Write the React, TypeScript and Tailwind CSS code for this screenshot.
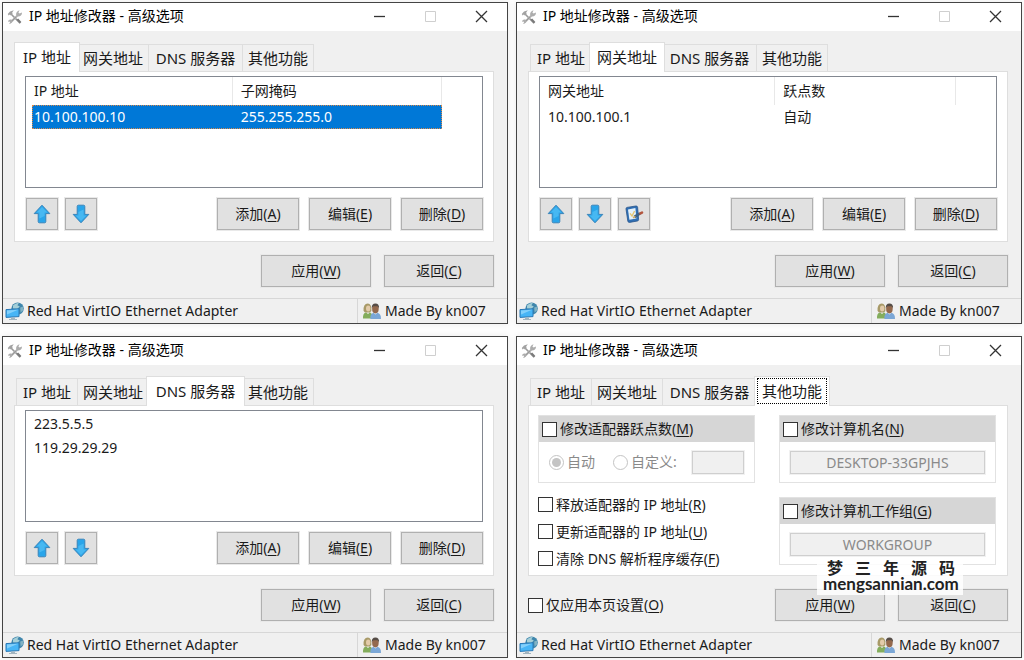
import type { ReactNode } from "react";
import clsx from "clsx";

const TABS = [
  { label: "IP 地址", width: "w-[62px]", activeWidth: "w-[66px]" },
  { label: "网关地址", width: "w-[72px]", activeWidth: "w-[76px]" },
  { label: "DNS 服务器", width: "w-[95px]", activeWidth: "w-[99px]" },
  { label: "其他功能", width: "w-[72px]", activeWidth: "w-[76px]" },
];

function ToolsIcon() {
  return (
    <svg viewBox="0 0 16 16" className="size-4" aria-hidden="true">
      <path d="M4.5 5.5 12.6 13.6" stroke="#9a9a9a" strokeWidth="1.6" strokeLinecap="round" />
      <path d="M0.8 5 3 2.4 6.8 1.2 5.2 3.4 5.6 5 3.8 6.6 2.8 5.6 1.6 6.4z" fill="#a2a2a2" />
      <path d="M10 7 4.2 12.8" stroke="#b4b4b4" strokeWidth="2" strokeLinecap="round" />
      <path d="M9 7.8 3.8 13" stroke="#8a8a8a" strokeWidth="0.8" />
      <path d="M9.2 6.4C8.6 4 10 1.8 12.6 1.2L11.4 3.4 12.6 4.6 15 3.4C15.2 6.2 13 7.6 10.8 7.4z" fill="#adadad" />
      <path d="M4.8 10.8C6 12.8 4.4 15 2 14.8L3.2 13.2 2.4 12.4 1 12.8C1 11 2.8 9.8 4.8 10.8z" fill="#adadad" />
      <path d="M9.4 10.8 12.8 14.4 14.4 13 11.2 9.4z" fill="#7a7a7a" />
    </svg>
  );
}

function ArrowIcon({ down }: { down?: boolean }) {
  return (
    <svg viewBox="0 0 18 20" className={clsx("h-5 w-[18px]", down && "rotate-180")} aria-hidden="true">
      <path d="M9 1.2 16.8 9.6H12.8V17.6Q12.8 18.8 11.6 18.8H6.4Q5.2 18.8 5.2 17.6V9.6H1.2z" fill="#29a5ea" stroke="#3a84ba" strokeWidth="1" strokeLinejoin="round" />
      <path d="M9 3 14.4 8.6H11.6V12L6.4 14.6V8.6H3.6z" fill="#5cc4f7" opacity="0.6" />
    </svg>
  );
}

function NotepadIcon() {
  return (
    <svg viewBox="0 0 20 20" className="size-5" aria-hidden="true">
      <path d="M3 3.4 11.8 2Q13.4 1.8 13.6 3.2L14.6 15.6Q14.6 16.8 13.4 17L5.6 18.4Q4 18.6 3.8 17L2 5Q1.9 3.6 3 3.4z" fill="#2f6fb4" stroke="#28548a" strokeWidth="0.8" />
      <path d="M4 5.4 11.4 4 12.4 14.4 5.4 15.8z" fill="#e4f1fb" />
      <path d="M6 9.4 8 12 10.6 7" fill="none" stroke="#e4c673" strokeWidth="1.4" />
      <path d="M10.4 13 16 9.4" stroke="#3f6385" strokeWidth="2.8" />
      <path d="M9 13.8 11.4 12.4" stroke="#cfa860" strokeWidth="1.6" />
      <path d="M16.4 9.4 18 8.6" stroke="#b3563f" strokeWidth="2.6" strokeLinecap="round" />
    </svg>
  );
}

function NetworkIcon() {
  return (
    <svg viewBox="0 0 20 20" className="size-5" aria-hidden="true">
      <circle cx="12.6" cy="7.6" r="6.2" fill="#3f86ac" />
      <path d="M8 4.6Q10.6 1.4 13.8 2L12.4 4.2 14.8 5.6 12.2 8 8 7.4z" fill="#a5cfd8" />
      <path d="M15.2 6.6 18.4 5.6 18 9.6 15.6 11.6z" fill="#82b3c4" />
      <path d="M1 8.6 14 7.8V15.6L1 16.4z" fill="#47b5f6" stroke="#2a78b5" strokeWidth="1" />
      <path d="M2 9.6 13 8.8 2 13.6z" fill="#83d0fb" />
      <path d="M6 16.6H10V18H12V19H4V18H6z" fill="#a3b5c0" />
    </svg>
  );
}

function UsersIcon() {
  return (
    <svg viewBox="0 0 20 18" className="h-[18px] w-5" aria-hidden="true">
      <path d="M1.6 9Q1 1.6 5.8 1.4 9.8 1.6 9.4 9L8 10.6H3z" fill="#a89a68" />
      <ellipse cx="6.2" cy="6.6" rx="2.2" ry="3" fill="#e3cbaa" />
      <path d="M1 16.6Q0.6 10.8 4.2 10.4L6 12 7.8 10.4Q10.6 11 10.6 16.6z" fill="#84ad5c" />
      <ellipse cx="13.4" cy="6.8" rx="3.3" ry="4.6" fill="#94694d" />
      <path d="M9.8 6Q9.6 1.4 13.4 1.4 17.4 1.4 17 6.2L15.6 4.2H11.4z" fill="#554c46" />
      <path d="M8.4 17Q8 11.6 11.6 10.8L13.4 12.4 15.4 10.8Q19.2 11.6 19 17z" fill="#7ba7d6" />
    </svg>
  );
}

/* Caption followed by its underlined access key, e.g. 添加(A) */
function Mnemonic({ text, letter }: { text: string; letter: string }) {
  return (
    <span className="whitespace-nowrap">
      {text}(<span className="underline underline-offset-2">{letter}</span>)
    </span>
  );
}

function PushButton({ text, letter, wide }: { text: string; letter: string; wide?: boolean }) {
  return (
    <button
      type="button"
      className={clsx(
        "flex h-8 items-center justify-center border border-[#b0b0b0] bg-[#e1e1e1] outline outline-[#e9e9e9]",
        wide ? "w-[110px]" : "w-[82px]"
      )}
    >
      <Mnemonic text={text} letter={letter} />
    </button>
  );
}

function IconButton({ label, children }: { label: string; children: ReactNode }) {
  return (
    <button
      type="button"
      aria-label={label}
      className="flex size-8 items-center justify-center border border-[#b0b0b0] bg-[#e1e1e1] outline outline-[#e9e9e9]"
    >
      {children}
    </button>
  );
}

function CheckBox({ text, letter }: { text: string; letter: string }) {
  return (
    <label className="flex items-center gap-[3px]">
      <input type="checkbox" className="size-[15px] shrink-0 appearance-none border border-[#333] bg-white" />
      <Mnemonic text={text} letter={letter} />
    </label>
  );
}

function TitleBar() {
  return (
    <header className="flex h-7 items-center bg-white pl-1">
      <ToolsIcon />
      <h2 className="ml-1.5 flex-1 pb-0.5 text-black">IP 地址修改器 - 高级选项</h2>
      <button type="button" aria-label="最小化" className="flex h-7 w-[51px] items-center justify-center pb-0.5">
        <svg viewBox="0 0 13 13" className="size-[13px]"><path d="M1 6.5H12" stroke="#333" strokeWidth="1.3" /></svg>
      </button>
      <button type="button" aria-label="最大化" disabled className="flex h-7 w-[51px] items-center justify-center pb-0.5">
        <svg viewBox="0 0 13 13" className="size-[13px]"><path d="M1.5 1.5H11.5V11.5H1.5z" fill="none" stroke="#cfcfcf" /></svg>
      </button>
      <button type="button" aria-label="关闭" className="flex h-7 w-[51px] items-center justify-center pb-0.5">
        <svg viewBox="0 0 13 13" className="size-[13px]"><path d="M1 1 12 12M12 1 1 12" stroke="#333" strokeWidth="1.3" /></svg>
      </button>
    </header>
  );
}

function TabBar({ active, focused }: { active: number; focused?: boolean }) {
  return (
    <div role="tablist" className="flex h-[29px] items-end pl-0.5 text-[15px]">
      {TABS.map((tab, i) => (
        <button
          key={tab.label}
          type="button"
          role="tab"
          aria-selected={i === active}
          className={clsx(
            "border-x border-t border-[#dedede] whitespace-nowrap",
            i === active
              ? ["relative z-10 -mr-[3px] -mb-px -ml-0.5 h-[30px] bg-white px-0.5 pt-px pb-0.5", tab.activeWidth]
              : ["-mr-px h-[27px] bg-[#f0f0f0]", tab.width]
          )}
        >
          {i === active ? (
            <span
              className={clsx(
                "flex h-full items-center justify-center border border-dotted",
                focused ? "border-black" : "border-transparent"
              )}
            >
              {tab.label}
            </span>
          ) : (
            tab.label
          )}
        </button>
      ))}
    </div>
  );
}

type ListProps = { columns: [string, string]; row: [string, string]; selected?: boolean };

function AddressTable({ columns, row, selected }: ListProps) {
  return (
    <table className="w-[91%] table-fixed border-separate border-spacing-0 text-left">
      <colgroup>
        <col className={selected ? "w-[49%]" : "w-[56%]"} />
        <col />
      </colgroup>
      <thead>
        <tr className="h-7">
          <th className="border-r border-[#e8e8e8] p-0 pl-0.5 font-normal">{columns[0]}</th>
          <th className="border-r border-[#e8e8e8] p-0 pl-2 font-normal">{columns[1]}</th>
        </tr>
      </thead>
      <tbody>
        <tr
          className={clsx(
            "h-6",
            selected && "bg-[#0078d7] text-white outline outline-dotted -outline-offset-1 outline-[#d98a4a]"
          )}
        >
          <td className="p-0 pl-0.5">{row[0]}</td>
          <td className="p-0 pl-2">{row[1]}</td>
        </tr>
      </tbody>
    </table>
  );
}

function ListPage({ children, notepad }: { children: ReactNode; notepad?: boolean }) {
  return (
    <div className="px-2.5 pt-1 pb-[11px]">
      <div className="h-28 border border-[#828790] bg-white pl-1.5">{children}</div>
      <div className="mt-2.5 flex justify-between pl-px">
        <div className="flex gap-[7px]">
          <IconButton label="上移"><ArrowIcon /></IconButton>
          <IconButton label="下移"><ArrowIcon down /></IconButton>
          {notepad && <IconButton label="修改跃点数"><NotepadIcon /></IconButton>}
        </div>
        <div className="flex gap-2.5">
          <PushButton text="添加" letter="A" />
          <PushButton text="编辑" letter="E" />
          <PushButton text="删除" letter="D" />
        </div>
      </div>
    </div>
  );
}

function Group({ text, letter, children }: { text: string; letter: string; children: ReactNode }) {
  return (
    <section className="h-[68px] border border-[#e2e2e2]">
      <div className="flex h-[26px] items-center bg-[#d6d6d6] pl-[3px]">
        <CheckBox text={text} letter={letter} />
      </div>
      <div className="flex h-10 items-center px-2.5 text-[#8a8a8a]">{children}</div>
    </section>
  );
}

const disabledInput =
  "h-[23px] border border-[#cfcfcf] bg-[#f0f0f0] text-center text-[#8a8a8a] outline outline-[#f1f1f1]";

function OtherPage() {
  return (
    <div className="grid grid-cols-2 gap-6 pt-[9px] pr-[11px] pb-[3px] pl-[9px]">
      <div>
        <Group text="修改适配器跃点数" letter="M">
          <label className="flex items-center gap-[3px]">
            <input
              type="radio"
              name="metric"
              disabled
              defaultChecked
              className="size-[15px] appearance-none rounded-full border border-[#c4c4c4] bg-white bg-clip-content p-[2px] checked:bg-[#c4c4c4]"
            />
            自动
          </label>
          <label className="ml-[18px] flex items-center gap-[3px]">
            <input
              type="radio"
              name="metric"
              disabled
              className="size-[15px] appearance-none rounded-full border border-[#c4c4c4] bg-white"
            />
            自定义:
          </label>
          <input type="text" aria-label="自定义跃点数" disabled className={clsx(disabledInput, "ml-auto w-[52px]")} />
        </Group>
        <div className="mt-2 flex flex-col">
          <div className="flex h-[27px] items-center"><CheckBox text="释放适配器的 IP 地址" letter="R" /></div>
          <div className="flex h-[27px] items-center"><CheckBox text="更新适配器的 IP 地址" letter="U" /></div>
          <div className="flex h-[27px] items-center"><CheckBox text="清除 DNS 解析程序缓存" letter="F" /></div>
        </div>
      </div>
      <div className="flex flex-col gap-3.5">
        <Group text="修改计算机名" letter="N">
          <input type="text" aria-label="计算机名" disabled defaultValue="DESKTOP-33GPJHS" className={clsx(disabledInput, "w-full")} />
        </Group>
        <Group text="修改计算机工作组" letter="G">
          <input type="text" aria-label="计算机工作组" disabled defaultValue="WORKGROUP" className={clsx(disabledInput, "w-full")} />
        </Group>
      </div>
    </div>
  );
}

function Watermark() {
  return (
    <div className="absolute right-[58px] bottom-[62px] z-20 flex h-[35px] w-[146px] flex-col bg-white/85 px-1.5 text-[#222]">
      <div className="flex justify-between pr-0.5 pl-1 text-base leading-4 font-bold">
        {["梦", "三", "年", "源", "码"].map((c) => (
          <span key={c}>{c}</span>
        ))}
      </div>
      <div className="text-center font-['Lato',sans-serif] text-[17px] leading-4 font-bold">mengsannian.com</div>
    </div>
  );
}

type WindowProps = { active: number; focused?: boolean; footer?: ReactNode; overlay?: ReactNode; children: ReactNode };

function AdvancedWindow({ active, focused, footer, overlay, children }: WindowProps) {
  return (
    <section className="relative border border-[#444] bg-[#f0f0f0] shadow-[0_0_6px_rgba(0,0,0,0.08)]">
      <TitleBar />
      <div className="pt-[11px] pr-[13px] pb-[11px] pl-[11px]">
        <TabBar active={active} focused={focused} />
        <div role="tabpanel" className="border border-[#dedede] bg-white">{children}</div>
        <div className="mt-[13px] flex items-center justify-between">
          <div>{footer}</div>
          <div className="flex gap-[13px]">
            <PushButton text="应用" letter="W" wide />
            <PushButton text="返回" letter="C" wide />
          </div>
        </div>
      </div>
      <footer className="flex h-[25px] items-center border-t border-[#d7d7d7]">
        <div className="flex flex-1 items-center gap-0.5 pl-0.5">
          <NetworkIcon />
          Red Hat VirtIO Ethernet Adapter
        </div>
        <div className="flex h-full w-[150px] items-center gap-[3px] border-l border-[#d7d7d7] pl-1">
          <UsersIcon />
          Made By kn007
        </div>
      </footer>
      {overlay}
    </section>
  );
}

export default function App() {
  return (
    <main className="grid min-w-[1000px] grid-cols-2 gap-x-2 gap-y-3 bg-[#fdfdfd] p-0.5 font-['Noto_Sans','Noto_Sans_CJK_SC',sans-serif] text-[14px] leading-5 text-[#1a1a1a]">
      <AdvancedWindow active={0}>
        <ListPage>
          <AddressTable columns={["IP 地址", "子网掩码"]} row={["10.100.100.10", "255.255.255.0"]} selected />
        </ListPage>
      </AdvancedWindow>
      <AdvancedWindow active={1}>
        <ListPage notepad>
          <AddressTable columns={["网关地址", "跃点数"]} row={["10.100.100.1", "自动"]} />
        </ListPage>
      </AdvancedWindow>
      <AdvancedWindow active={2}>
        <ListPage>
          <ul className="pt-px pl-0.5 leading-6">
            <li>223.5.5.5</li>
            <li>119.29.29.29</li>
          </ul>
        </ListPage>
      </AdvancedWindow>
      <AdvancedWindow
        active={3}
        focused
        footer={<CheckBox text="仅应用本页设置" letter="O" />}
        overlay={<Watermark />}
      >
        <OtherPage />
      </AdvancedWindow>
    </main>
  );
}
